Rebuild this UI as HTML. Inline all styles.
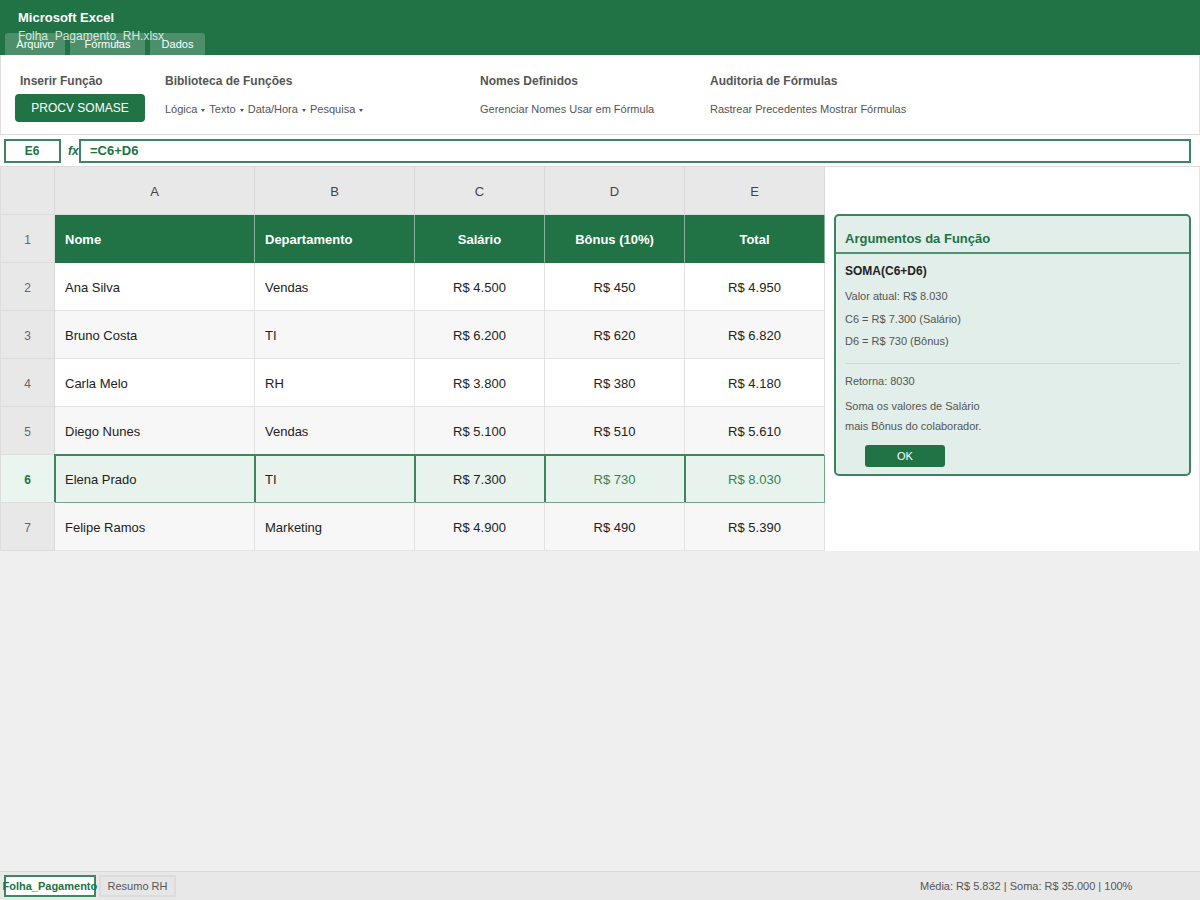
<!DOCTYPE html>
<html>
<head>
<meta charset="utf-8">
<style>
*{box-sizing:border-box;margin:0;padding:0}
html,body{width:1200px;height:900px;overflow:hidden;background:#efefef;font-family:"Liberation Sans",sans-serif;position:relative}
.abs{position:absolute}
#hdr{left:0;top:0;width:1200px;height:55px;background:#217346}
#hdr .t1{left:18px;top:10px;font-size:13px;font-weight:700;color:#fff;line-height:15px;white-space:nowrap}
#hdr .t2{left:18px;top:29px;font-size:12px;color:rgba(255,255,255,.8);line-height:14px;white-space:nowrap}
.tab{top:33px;height:22px;background:rgba(255,255,255,.2);border-radius:3px 3px 0 0;color:#fff;font-size:11px;text-align:center;line-height:23px}
#rib{left:0;top:55px;width:1200px;height:80px;background:#fff;border-left:1px solid #ddd;border-right:1px solid #e2e2e2;border-bottom:1px solid #ddd}
.glab{font-size:12px;font-weight:700;color:#555;white-space:nowrap;line-height:14px}
.gitem{font-size:11px;color:#555;white-space:nowrap;line-height:13px}
.tri{display:inline-block;width:6px;height:13px;position:relative;vertical-align:top}
.tri:after{content:"";position:absolute;left:1px;top:5.5px;border-left:2.5px solid transparent;border-right:2.5px solid transparent;border-top:3.5px solid #555}
.btn{background:#217346;color:#fff;border-radius:4px;font-size:12px;text-align:center}
#fbar{left:0;top:135px;width:1200px;height:32px;background:#fff;border-bottom:1px solid #ddd}
.nbox{left:4px;top:4px;width:57px;height:24px;border:2px solid #3d8560;color:#217346;font-weight:700;font-size:12px;text-align:center;line-height:20px;background:#fff;padding-right:1px}
.fx{left:68px;top:9px;font-size:12px;font-style:italic;font-weight:700;color:#217346;line-height:14px}
.finp{left:79px;top:4px;width:1112px;height:24px;border:2px solid #3d8560;color:#217346;font-weight:700;font-size:13px;line-height:20px;padding-left:9px;background:#fff}
#grid{left:0;top:167px;width:1200px;height:384px;background:#fff;border-right:1px solid #e4e4e4}
.rh{background:#e8e8e8;border-left:1px solid #ddd;border-right:1px solid #d9d9d9;border-bottom:1px solid #dcdcdc;text-align:center;font-size:12px;color:#666;line-height:50px}
.ch{background:#e8e8e8;border-right:1px solid #d9d9d9;border-bottom:1px solid #dcdcdc;text-align:center;font-size:13px;color:#444;line-height:50px}
.th{background:#217346;color:#fff;font-weight:700;font-size:13px;line-height:50px;border-right:1px solid #88b09a;border-bottom:1px solid #217346}
.td{font-size:13px;color:#222;line-height:50px;border-right:1px solid #e2e2e2;border-bottom:1px solid #e4e4e4;white-space:nowrap}
.left{text-align:left;padding-left:10px}
.center{text-align:center}
.even{background:#fff}
.odd{background:#f7f7f7}
.sel{background:#e9f3ed;border-bottom:1px solid #73a58b}
.sel:before{content:"";position:absolute;left:-1px;top:-1px;right:0;height:2px;background:#3d8560}
.sel:after{content:"";position:absolute;left:-1px;top:-1px;bottom:0;width:2px;background:#3d8560}
.sel.last{border-right:1px solid #73a58b}
.rsel{background:#e9f5ee;color:#217346;font-weight:700}
.gtxt{color:#2f8552}
#dlg{left:834px;top:214px;width:357px;height:262px;background:#e2eee9;border:2px solid #3a8360;border-radius:5px}
.dtitle{left:9px;top:15px;font-size:13px;font-weight:700;color:#217346;line-height:15px;white-space:nowrap}
.dsep{left:0;top:36px;width:353px;height:2px;background:#4f9270}
.dt{left:9px;font-size:11px;color:#555;line-height:13px;white-space:nowrap}
#sbar{left:0;top:871px;width:1200px;height:29px;background:#e8e8e8;border-top:1px solid #dadada}
.stab1{left:4px;top:3px;width:92px;height:22px;border:2px solid #3f8760;background:#fff}
.stab1t{left:2.5px;top:8px;font-size:11px;font-weight:700;color:#217346;line-height:13px;white-space:nowrap}
.stab2{left:99px;top:3px;width:77px;height:22px;border:2px solid #dcdcdc;background:#e6e6e6;font-size:11px;color:#555;line-height:18px;text-align:center}
.stat{left:920px;top:8px;font-size:11px;color:#555;line-height:13px;white-space:nowrap}
</style>
</head>
<body>
<div id="hdr" class="abs">
  <div class="abs t1">Microsoft Excel</div>
  <div class="abs t2">Folha_Pagamento_RH.xlsx</div>
  <div class="abs tab" style="left:5px;width:60px">Arquivo</div>
  <div class="abs tab" style="left:70px;width:75px">Fórmulas</div>
  <div class="abs tab" style="left:150px;width:55px">Dados</div>
</div>
<div id="rib" class="abs">
  <div class="abs glab" style="left:19px;top:19px">Inserir Função</div>
  <div class="abs btn" style="left:14px;top:39px;width:130px;height:28px;line-height:28px">PROCV SOMASE</div>
  <div class="abs glab" style="left:164px;top:19px">Biblioteca de Funções</div>
  <div class="abs gitem" style="left:164px;top:48px">Lógica <span class="tri"></span> Texto <span class="tri"></span> Data/Hora <span class="tri"></span> Pesquisa <span class="tri"></span></div>
  <div class="abs glab" style="left:479px;top:19px">Nomes Definidos</div>
  <div class="abs gitem" style="left:479px;top:48px">Gerenciar Nomes Usar em Fórmula</div>
  <div class="abs glab" style="left:709px;top:19px">Auditoria de Fórmulas</div>
  <div class="abs gitem" style="left:709px;top:48px">Rastrear Precedentes Mostrar Fórmulas</div>
</div>
<div id="fbar" class="abs">
  <div class="abs nbox">E6</div>
  <div class="abs fx">fx</div>
  <div class="abs finp">=C6+D6</div>
</div>
<div id="grid" class="abs">
<div class="abs rh" style="left:0;top:0;width:55px;height:48px"></div>
<div class="abs ch" style="left:55px;top:0;width:200px;height:48px">A</div>
<div class="abs ch" style="left:255px;top:0;width:160px;height:48px">B</div>
<div class="abs ch" style="left:415px;top:0;width:130px;height:48px">C</div>
<div class="abs ch" style="left:545px;top:0;width:140px;height:48px">D</div>
<div class="abs ch" style="left:685px;top:0;width:140px;height:48px">E</div>
<div class="abs rh" style="left:0;top:48px;width:55px;height:48px">1</div>
<div class="abs th left" style="left:55px;top:48px;width:200px;height:48px">Nome</div>
<div class="abs th left" style="left:255px;top:48px;width:160px;height:48px">Departamento</div>
<div class="abs th center" style="left:415px;top:48px;width:130px;height:48px">Salário</div>
<div class="abs th center" style="left:545px;top:48px;width:140px;height:48px">Bônus (10%)</div>
<div class="abs th center" style="left:685px;top:48px;width:140px;height:48px">Total</div>
<div class="abs rh " style="left:0;top:96px;width:55px;height:48px">2</div>
<div class="abs td even left" style="left:55px;top:96px;width:200px;height:48px">Ana Silva</div>
<div class="abs td even left" style="left:255px;top:96px;width:160px;height:48px">Vendas</div>
<div class="abs td even center" style="left:415px;top:96px;width:130px;height:48px">R$ 4.500</div>
<div class="abs td even center" style="left:545px;top:96px;width:140px;height:48px">R$ 450</div>
<div class="abs td even center" style="left:685px;top:96px;width:140px;height:48px">R$ 4.950</div>
<div class="abs rh " style="left:0;top:144px;width:55px;height:48px">3</div>
<div class="abs td odd left" style="left:55px;top:144px;width:200px;height:48px">Bruno Costa</div>
<div class="abs td odd left" style="left:255px;top:144px;width:160px;height:48px">TI</div>
<div class="abs td odd center" style="left:415px;top:144px;width:130px;height:48px">R$ 6.200</div>
<div class="abs td odd center" style="left:545px;top:144px;width:140px;height:48px">R$ 620</div>
<div class="abs td odd center" style="left:685px;top:144px;width:140px;height:48px">R$ 6.820</div>
<div class="abs rh " style="left:0;top:192px;width:55px;height:48px">4</div>
<div class="abs td even left" style="left:55px;top:192px;width:200px;height:48px">Carla Melo</div>
<div class="abs td even left" style="left:255px;top:192px;width:160px;height:48px">RH</div>
<div class="abs td even center" style="left:415px;top:192px;width:130px;height:48px">R$ 3.800</div>
<div class="abs td even center" style="left:545px;top:192px;width:140px;height:48px">R$ 380</div>
<div class="abs td even center" style="left:685px;top:192px;width:140px;height:48px">R$ 4.180</div>
<div class="abs rh " style="left:0;top:240px;width:55px;height:48px">5</div>
<div class="abs td odd left" style="left:55px;top:240px;width:200px;height:48px">Diego Nunes</div>
<div class="abs td odd left" style="left:255px;top:240px;width:160px;height:48px">Vendas</div>
<div class="abs td odd center" style="left:415px;top:240px;width:130px;height:48px">R$ 5.100</div>
<div class="abs td odd center" style="left:545px;top:240px;width:140px;height:48px">R$ 510</div>
<div class="abs td odd center" style="left:685px;top:240px;width:140px;height:48px">R$ 5.610</div>
<div class="abs rh rsel" style="left:0;top:288px;width:55px;height:48px">6</div>
<div class="abs td sel left" style="left:55px;top:288px;width:200px;height:48px">Elena Prado</div>
<div class="abs td sel left" style="left:255px;top:288px;width:160px;height:48px">TI</div>
<div class="abs td sel center" style="left:415px;top:288px;width:130px;height:48px">R$ 7.300</div>
<div class="abs td sel center gtxt" style="left:545px;top:288px;width:140px;height:48px">R$ 730</div>
<div class="abs td sel last center gtxt" style="left:685px;top:288px;width:140px;height:48px">R$ 8.030</div>
<div class="abs rh " style="left:0;top:336px;width:55px;height:48px">7</div>
<div class="abs td odd left" style="left:55px;top:336px;width:200px;height:48px">Felipe Ramos</div>
<div class="abs td odd left" style="left:255px;top:336px;width:160px;height:48px">Marketing</div>
<div class="abs td odd center" style="left:415px;top:336px;width:130px;height:48px">R$ 4.900</div>
<div class="abs td odd center" style="left:545px;top:336px;width:140px;height:48px">R$ 490</div>
<div class="abs td odd center" style="left:685px;top:336px;width:140px;height:48px">R$ 5.390</div>
</div>
<div id="dlg" class="abs">
  <div class="abs dtitle">Argumentos da Função</div>
  <div class="abs dsep"></div>
  <div class="abs dt" style="top:48px;font-size:12px;font-weight:700;color:#222;line-height:14px">SOMA(C6+D6)</div>
  <div class="abs dt" style="top:74px">Valor atual: R$ 8.030</div>
  <div class="abs dt" style="top:97px">C6 = R$ 7.300 (Salário)</div>
  <div class="abs dt" style="top:119px">D6 = R$ 730 (Bônus)</div>
  <div class="abs" style="left:9px;top:147px;width:335px;height:1px;background:#cfd8d3"></div>
  <div class="abs dt" style="top:159px">Retorna: 8030</div>
  <div class="abs dt" style="top:184px">Soma os valores de Salário</div>
  <div class="abs dt" style="top:204px">mais Bônus do colaborador.</div>
  <div class="abs btn" style="left:29px;top:229px;width:80px;height:22px;line-height:22px;font-size:11px;border-radius:3px">OK</div>
</div>
<div id="sbar" class="abs">
  <div class="abs stab1"></div><div class="abs stab1t">Folha_Pagamento</div>
  <div class="abs stab2">Resumo RH</div>
  <div class="abs stat">Média: R$ 5.832 | Soma: R$ 35.000 | 100%</div>
</div>
</body>
</html>
